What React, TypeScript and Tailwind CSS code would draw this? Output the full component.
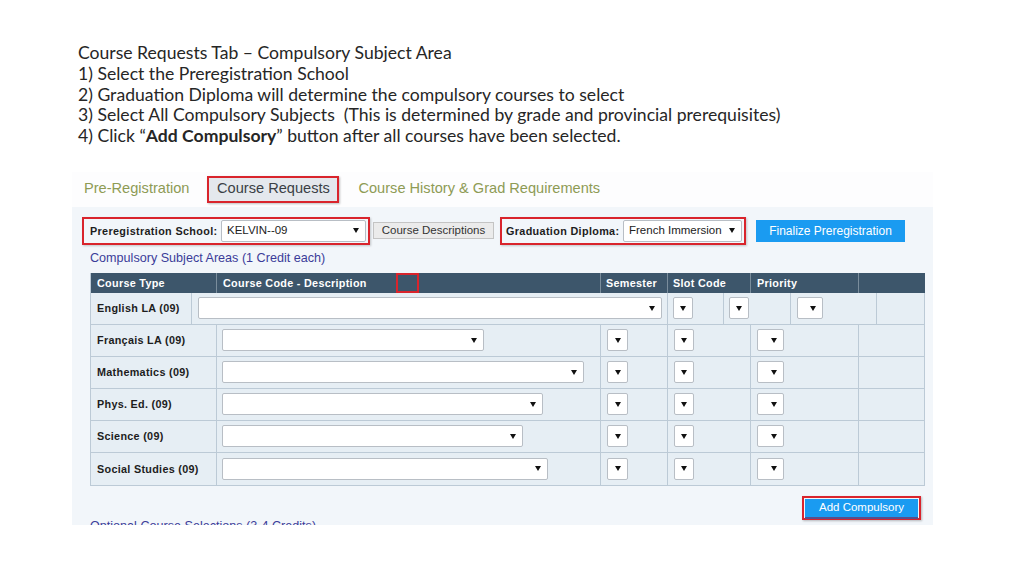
import React from 'react';

const Arrow: React.FC = () => (
  <svg width="6" height="5" viewBox="0 0 6 5" className="shrink-0">
    <path d="M0 0h6L3 5z" fill="#111" />
  </svg>
);

const Sel: React.FC<{ w: string; text?: string; className?: string }> = ({ w, text, className }) => (
  <div
    className={`${w} h-[22px] bg-white border border-[#b8bec5] rounded-[2px] flex items-center justify-between pl-[5px] pr-[6px] text-[11.5px] text-[#222] ${className ?? ''}`}
  >
    <span>{text ?? ''}</span>
    <Arrow />
  </div>
);

const rows = [
  { label: 'Français LA (09)', w: 'w-[262px]' },
  { label: 'Mathematics (09)', w: 'w-[362px]' },
  { label: 'Phys. Ed. (09)', w: 'w-[321px]' },
  { label: 'Science (09)', w: 'w-[301px]' },
  { label: 'Social Studies (09)', w: 'w-[326px]' },
];

const cell = 'h-full border-r border-[#bccad6] flex items-center';

const App: React.FC = () => {
  return (
    <div className="w-[1024px] h-[576px] bg-white overflow-hidden" style={{ fontFamily: '"Liberation Sans", Arial, sans-serif' }}>
      {/* slide text */}
      <div className="pl-[78px] pt-[43px] text-[17.6px] leading-[20.75px] text-[#262626]" style={{ fontFamily: 'Lato, "Open Sans", sans-serif' }}>
        <p>Course Requests Tab – Compulsory Subject Area</p>
        <p>1) Select the Preregistration School</p>
        <p>2) Graduation Diploma will determine the compulsory courses to select</p>
        <p>3) Select All Compulsory Subjects&nbsp; (This is determined by grade and provincial prerequisites)</p>
        <p>
          4) Click “<span className="font-bold">Add Compulsory</span>” button after all courses have been selected.
        </p>
      </div>

      {/* screenshot */}
      <div className="ml-[72px] mt-[25px] w-[861px]">
        {/* tabs */}
        <div className="h-[35px] flex items-center text-[14.6px] bg-[#fdfdfe]">
          <span className="ml-[12px] text-[#8e9b55]">Pre-Registration</span>
          <div className="ml-[18px] h-[27px] w-[132px] border-2 border-[#d9242c] bg-[#e4e8ed] flex items-center justify-center text-[#3a3f45] shadow-[1px_1px_2px_rgba(0,0,0,0.25)]">
            Course Requests
          </div>
          <span className="ml-[19px] text-[#8e9b55]">Course History &amp; Grad Requirements</span>
        </div>

        {/* panel */}
        <div className="h-[318px] bg-[#f2f6fa] overflow-hidden pt-[10px]">
          {/* top controls */}
          <div className="flex items-center h-[28px]">
            <div className="ml-[10px] w-[288px] h-[28px] border-2 border-[#d9242c] flex items-center pl-[6px] pr-[2px] shadow-[1px_1px_2px_rgba(0,0,0,0.2)]">
              <span className="text-[10.8px] font-bold text-[#1d1d1d] tracking-[0.35px] w-[131px]">Preregistration School:</span>
              <Sel w="w-[145px]" text="KELVIN--09" />
            </div>
            <div className="ml-[3px] w-[121px] h-[17px] bg-[#ebebeb] border border-[#c4c4c4] flex items-center justify-center text-[11.5px] text-[#333]">
              Course Descriptions
            </div>
            <div className="ml-[6px] w-[246px] h-[28px] border-2 border-[#d9242c] flex items-center pl-[4px] shadow-[1px_1px_2px_rgba(0,0,0,0.2)]">
              <span className="text-[10.8px] font-bold text-[#1d1d1d] tracking-[0.35px] w-[117px]">Graduation Diploma:</span>
              <Sel w="w-[119px]" text="French Immersion" />
            </div>
            <div className="ml-[10px] w-[149px] h-[22px] bg-[#1a9bf1] flex items-center justify-center text-white text-[12px]">
              Finalize Preregistration
            </div>
          </div>

          {/* heading */}
          <div className="ml-[18px] mt-[7px] h-[13px] leading-[13px] text-[12.6px] text-[#3b3c99]">
            Compulsory Subject Areas (1 Credit each)
          </div>

          {/* table */}
          <div className="ml-[18px] mt-[8px] w-[835px] border-l border-b border-[#bccad6] text-[10.8px] font-bold tracking-[0.3px]">
            {/* header */}
            <div className="h-[20px] bg-[#3d566b] text-white flex">
              <div className="w-[126px] h-full border-r border-[#7a8d9c] flex items-center pl-[6px]">Course Type</div>
              <div className="w-[384px] h-full border-r border-[#7a8d9c] flex items-center pl-[6px] relative">
                Course Code - Description
                <div className="absolute left-[179px] top-0 w-[23px] h-[20px] border-2 border-[#d9242c]" />
              </div>
              <div className="w-[67px] h-full border-r border-[#7a8d9c] flex items-center pl-[5px]">Semester</div>
              <div className="w-[83px] h-full border-r border-[#7a8d9c] flex items-center pl-[5px]">Slot Code</div>
              <div className="w-[108px] h-full border-r border-[#7a8d9c] flex items-center pl-[6px]">Priority</div>
              <div className="flex-1 h-full" />
            </div>

            {/* english row */}
            <div className="h-[32px] bg-[#e6eef4] flex border-b border-[#bccad6] text-[#1d1d1d]">
              <div className={`${cell} w-[101px] pl-[6px]`}>English LA (09)</div>
              <div className={`${cell} w-[476px] pl-[6px]`}>
                <Sel w="w-[464px]" />
              </div>
              <div className={`${cell} w-[56px] pl-[5px]`}>
                <Sel w="w-[20px]" className="px-[6px]" />
              </div>
              <div className={`${cell} w-[67px] pl-[5px]`}>
                <Sel w="w-[20px]" className="px-[6px]" />
              </div>
              <div className={`${cell} w-[86px] pl-[6px]`}>
                <Sel w="w-[26px]" />
              </div>
              <div className="flex-1 h-full border-r border-[#bccad6]" />
            </div>

            {rows.map((r, i) => (
              <div
                key={r.label}
                className={`h-[32px] bg-[#e6eef4] flex text-[#1d1d1d] ${i < rows.length - 1 ? 'border-b border-[#bccad6]' : ''}`}
              >
                <div className={`${cell} w-[126px] pl-[6px]`}>{r.label}</div>
                <div className={`${cell} w-[384px] pl-[5px]`}>
                  <Sel w={r.w} />
                </div>
                <div className={`${cell} w-[67px] pl-[6px]`}>
                  <Sel w="w-[21px]" className="px-[6px]" />
                </div>
                <div className={`${cell} w-[83px] pl-[6px]`}>
                  <Sel w="w-[20px]" className="px-[6px]" />
                </div>
                <div className={`${cell} w-[108px] pl-[6px]`}>
                  <Sel w="w-[27px]" />
                </div>
                <div className="flex-1 h-full border-r border-[#bccad6]" />
              </div>
            ))}
          </div>

          {/* add compulsory */}
          <div className="flex justify-end mt-[10px] pr-[12px]">
            <div className="w-[119px] h-[24px] border-2 border-[#d9242c] p-[1px] shadow-[1px_1px_2px_rgba(0,0,0,0.25)]">
              <div className="w-full h-full bg-[#1a9bf1] flex items-center justify-center text-white text-[11.5px] shadow-[0_2px_0_#5a4f8a]">
                Add Compulsory
              </div>
            </div>
          </div>
          <div className="ml-[18px] mt-[0px] text-[12.6px] leading-[13px] text-[#3b3c99]">
            Optional Course Selections (3-4 Credits)
          </div>
        </div>
      </div>
    </div>
  );
};

export default App;
